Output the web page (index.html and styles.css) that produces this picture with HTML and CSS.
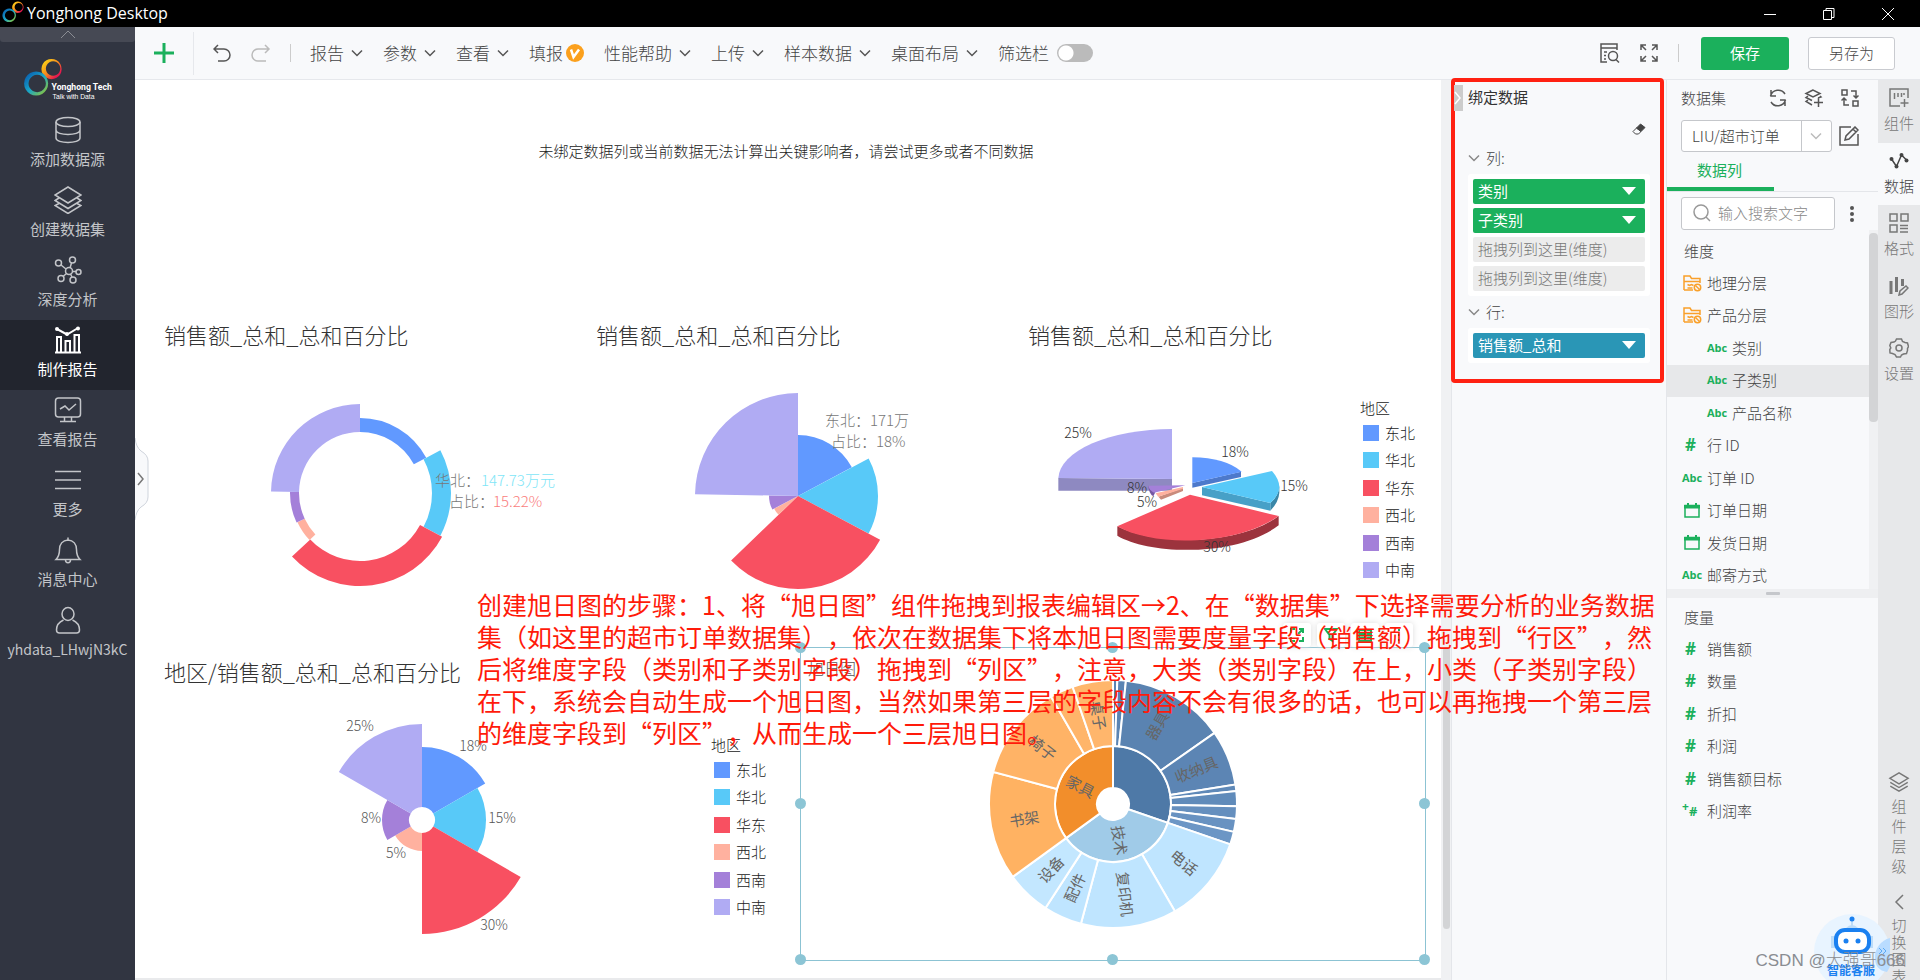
FILE: index.html
```html
<!DOCTYPE html>
<html lang="zh-CN">
<head>
<meta charset="utf-8">
<title>Yonghong Desktop</title>
<link rel="stylesheet" href="styles.css">
</head>
<body>
<svg class="defs" width="0" height="0" aria-hidden="true">
  <defs>
    <linearGradient id="warm" x1="0" y1="0" x2="1" y2="1"><stop offset="0.1" stop-color="#fbd616"/><stop offset="0.5" stop-color="#f5851f"/><stop offset="0.8" stop-color="#e5174f"/></linearGradient>
    <linearGradient id="cool" x1="0" y1="0" x2="1" y2="1"><stop offset="0.1" stop-color="#0a5fb0"/><stop offset="0.5" stop-color="#18a5c8"/><stop offset="0.9" stop-color="#8bc53f"/></linearGradient>
    <symbol id="rings" viewBox="0 0 40 48"><path fill="url(#warm)" fill-rule="evenodd" d="M29 1a10.500 10.500 0 1 1-.1 0zM30.500 3.500a7.500 7.500 0 1 0 .1 0z"/><path fill="url(#cool)" fill-rule="evenodd" d="M13 14a12.500 12.500 0 1 1-.1 0zM14 17.500a9 9 0 1 0 .1 0z"/></symbol>
    <symbol id="chev" viewBox="0 0 12 8"><path d="M1 1.500l5 5 5-5"/></symbol>
    <symbol id="folder" viewBox="0 0 20 18"><path d="M2 16V2h6l1.500 2.500H18V9M2 7.500h16M2 16h9M5.500 10.500l2 1 2-1 2 1M5.500 14h5"/><circle cx="15.500" cy="13.500" r="3.200"/><path d="M13.500 11.500l4 4"/></symbol>
    <symbol id="cal" viewBox="0 0 16 15"><path d="M1 2.500h14v11.500H1z" fill="none" stroke="#1bb05c" stroke-width="1.500"/><path d="M0 2h3V0h2v2h6V0h2v2h3v3.500H0z" fill="#1bb05c"/></symbol>
    <symbol id="stack" viewBox="0 0 24 24"><path d="M12 2L2 8l10 6 10-6zM2.500 12.500L12 18l9.500-5.500M2.500 16.500L12 22l9.500-5.500"/></symbol>
  </defs>
</svg>

<header class="titlebar">
  <svg class="app-logo" width="22" height="26"><use href="#rings"/></svg>
  <span class="app-name">Yonghong Desktop</span>
  <div class="win">
    <button aria-label="最小化"><svg width="14" height="14"><path d="M1 7.500h12"/></svg></button>
    <button aria-label="还原"><svg width="14" height="14"><path d="M1.500 3.500h8v9h-8zM4 3.500v-2h8v9H9.500"/></svg></button>
    <button aria-label="关闭"><svg width="14" height="14"><path d="M1 1l12 12M13 1L1 13"/></svg></button>
  </div>
</header>

<div class="app">
  <nav class="side">
    <button class="fold" aria-label="收起"><svg width="16" height="9"><path d="M1 8l7-7 7 7"/></svg></button>
    <svg class="brand" width="92" height="54" viewBox="0 0 92 54">
      <use href="#rings" width="40" height="48" x="1" y="0"/>
      <text x="30" y="33" class="brand-a">Yonghong Tech</text>
      <text x="31" y="43" class="brand-b">Talk with Data</text>
    </svg>
    <a class="nav" href="#"><svg width="28" height="28"><ellipse cx="14" cy="6" rx="12" ry="4.500"/><path d="M2 6v16c0 6 24 6 24 0V6M2 14c0 6 24 6 24 0"/></svg><span>添加数据源</span></a>
    <a class="nav" href="#"><svg width="28" height="28"><path d="M14 1L1 9l13 8 13-8zM5 12l-4 2.500 13 8 13-8-4-2.500M5 17.500L1 19.500l13 8 13-8-4-2"/></svg><span>创建数据集</span></a>
    <a class="nav" href="#"><svg width="28" height="28"><circle cx="15" cy="15" r="3.500"/><circle cx="4.500" cy="7" r="3"/><circle cx="18.500" cy="4" r="3"/><circle cx="24.500" cy="16" r="2.500"/><circle cx="7" cy="22.500" r="3"/><circle cx="19" cy="24" r="3"/><path d="M7 9l5 4M17.500 7l-1.500 5M18.500 15.500H22M12.500 17.500L9 20.500M16.500 18l1.500 3"/></svg><span>深度分析</span></a>
    <a class="nav on" href="#"><svg width="28" height="28"><path d="M1 26.500h26M3 26V11h4v15M11.500 26V15h4.500v11M20.500 26V9h4.500v17M3 3l10 5.500L24 2"/><circle cx="3" cy="3" r="1"/><circle cx="13" cy="8" r="1"/><circle cx="24" cy="2.500" r="1"/></svg><span>制作报告</span></a>
    <a class="nav" href="#"><svg width="28" height="28"><rect x="1.500" y="2" width="25" height="19" rx="3"/><path d="M6 13l5-3 4 4 7-6M10.500 21v4M17.500 21v4M6 25.500h16"/></svg><span>查看报告</span></a>
    <a class="nav" href="#"><svg width="28" height="28"><path d="M1 5.500h26M1 14h26M1 22.500h26"/></svg><span>更多</span></a>
    <a class="nav" href="#"><svg width="28" height="28"><path d="M2 23.500h24c-3-3-3.500-5-3.500-10 0-5-3-9-8.500-9.500-5.500.5-8.500 4.500-8.500 9.500 0 5-.5 7-3.500 10zM14 4V1.500M11.500 24c0 3.500 5 3.500 5 0"/></svg><span>消息中心</span></a>
    <a class="nav user" href="#"><svg width="28" height="28"><ellipse cx="14" cy="8" rx="6" ry="6.500"/><path d="M9.500 14C5 16 2.500 19.500 2.500 24q0 3 3 3h17q3 0 3-3c0-4.500-2.500-8-7-10"/></svg><span>yhdata_LHwjN3kC</span></a>
  </nav>

  <div class="main">
    <div class="toolbar">
      <button class="plus" aria-label="新建"><svg width="20" height="20"><path d="M10 0v20M0 10h20"/></svg></button>
      <div class="history">
        <button aria-label="撤销"><svg width="18" height="18"><path d="M5 1L1 5l4 4M1 5h10a6 6 0 0 1 0 12H5"/></svg></button>
        <button aria-label="重做" class="dim"><svg width="20" height="18"><path d="M14 1l4 4-4 4M18 5H7a6 6 0 0 0 0 12h8"/></svg></button>
      </div>
      <div class="menus">
        <button>报告<svg width="12" height="8"><use href="#chev"/></svg></button>
        <button>参数<svg width="12" height="8"><use href="#chev"/></svg></button>
        <button>查看<svg width="12" height="8"><use href="#chev"/></svg></button>
        <button class="vip">填报<svg width="18" height="18"><circle cx="9" cy="9" r="9"/><path d="M5 5.500l2.500 7.500L13 5.500"/></svg></button>
        <button>性能帮助<svg width="12" height="8"><use href="#chev"/></svg></button>
        <button>上传<svg width="12" height="8"><use href="#chev"/></svg></button>
        <button>样本数据<svg width="12" height="8"><use href="#chev"/></svg></button>
        <button>桌面布局<svg width="12" height="8"><use href="#chev"/></svg></button>
        <label>筛选栏<input type="checkbox" class="switch"></label>
      </div>
      <div class="actions">
        <button class="ib" aria-label="预览"><svg width="20" height="20"><path d="M7 19H1V1h16v6M1 5h16M4 9h3M4 12.500h2M4 16h2"/><circle cx="13" cy="13" r="4.500"/><path d="M16 16.500l3 3"/></svg></button>
        <button class="ib" aria-label="全屏"><svg width="18" height="18"><path d="M1 6V1h5M1 1l5 5M12 1h5v5M17 1l-5 5M1 12v5h5M1 17l5-5M17 12v5h-5M17 17l-5-5"/></svg></button>
        <button class="save">保存</button>
        <button class="saveas">另存为</button>
      </div>
    </div>

    <div class="work">
      <main class="canvas">
        <p class="notice">未绑定数据列或当前数据无法计算出关键影响者，请尝试更多或者不同数据</p>
        <div class="row3">
          <section class="widget">
            <h2>销售额_总和_总和百分比</h2>
            <svg id="ring" width="432" height="301" viewBox="145 354 432 301">
              <g class="slices"></g>
              <g class="tip"><text x="435" y="486">华北：</text><text x="481" y="486" class="t-cyan">147.73万元</text><text x="449" y="507">占比：</text><text x="493" y="507" class="t-red">15.22%</text></g>
            </svg>
          </section>
          <section class="widget">
            <h2>销售额_总和_总和百分比</h2>
            <svg id="rose" width="432" height="301" viewBox="577 354 432 301">
              <g class="slices"></g>
              <g class="tip"><text x="825" y="426">东北：171万</text><text x="831" y="447">占比：18%</text></g>
            </svg>
          </section>
          <section class="widget">
            <h2>销售额_总和_总和百分比</h2>
            <div class="body">
              <svg width="346" height="301" viewBox="1009 354 346 301">
                <g transform="translate(1000 300) scale(.33333)">
                  <path fill="#8e89c1" d="M175 534L516 537V572L175 572z"/>
                  <path fill="#b0abf3" d="M516 387V537L175 534A341 150 0 0 1 516 387z"/>
                  <path fill="#4d79cb" d="M577 549L723 515V531L577 563z"/>
                  <path fill="#6199ff" d="M577 472Q675 473 725 515L577 549z"/>
                  <path fill="#3a87a8" d="M811 609Q836 590 838 556V578Q836 606 811 632z"/>
                  <path fill="#47a0c7" d="M606 561L811 609V632L606 586z"/>
                  <path fill="#58c9f8" d="M606 561L816 513Q862 565 811 609z"/>
                  <path fill="#9c333d" d="M352 679C460 735 710 740 836 648V676C710 772 450 765 352 707z"/>
                  <path fill="#f85061" d="M570 584L836 648C710 738 460 742 352 679z"/>
                  <path fill="#7558a2" d="M445 557L466 577L460 589Q446 580 445 557z"/>
                  <path fill="#a480d9" d="M556 556L445 557Q447 570 462 578z"/>
                  <path fill="#c98b7c" d="M467 580L475 590L549 564V573L483 599z"/>
                  <path fill="#ffb19f" d="M467 580L475 590L549 566V561z"/>
                </g>
                <g class="pct dark">
                  <text x="1078" y="438">25%</text><text x="1235" y="457">18%</text><text x="1294" y="491">15%</text>
                  <text x="1137" y="493">8%</text><text x="1147" y="507">5%</text><text x="1217" y="552">30%</text>
                </g>
              </svg>
              <div class="legend">
                <h3>地区</h3>
                <ul><li class="c1">东北</li><li class="c2">华北</li><li class="c3">华东</li><li class="c4">西北</li><li class="c5">西南</li><li class="c6">中南</li></ul>
              </div>
            </div>
          </section>
        </div>
        <div class="row2">
          <section class="widget half">
            <h2>地区/销售额_总和_总和百分比</h2>
            <div class="body">
              <svg id="petal" width="561" height="285" viewBox="145 691 561 285">
                <g class="slices"></g>
                <g class="pct">
                  <text x="360" y="731">25%</text><text x="473" y="751">18%</text><text x="502" y="823">15%</text>
                  <text x="494" y="930">30%</text><text x="396" y="858">5%</text><text x="371" y="823">8%</text>
                </g>
              </svg>
              <div class="legend">
                <h3>地区</h3>
                <ul><li class="c1">东北</li><li class="c2">华北</li><li class="c3">华东</li><li class="c4">西北</li><li class="c5">西南</li><li class="c6">中南</li></ul>
              </div>
            </div>
          </section>
          <section class="widget picked">
            <h2>旭日图</h2>
            <svg id="sun" viewBox="801 648 624 312"><g class="slices"></g><g class="names"></g></svg>
            <i class="h tl"></i><i class="h tc"></i><i class="h tr"></i><i class="h ml"></i><i class="h mr"></i><i class="h bl"></i><i class="h bc"></i><i class="h br"></i>
            <div class="quick">
              <button aria-label="放大"><svg width="16" height="16"><path d="M2 6V2h4M10 2h4v4M14 2l-5 5M2 10v4h4M14 10v4h-4"/></svg></button>
              <button aria-label="筛选"><svg width="16" height="16"><path d="M2 2h12L9.500 8v6l-3-2V8z"/></svg></button>
              <button aria-label="表格"><svg width="16" height="16"><path d="M2 3h12v11H2zM2 7h12M2 10.500h12M8 3v11"/></svg></button>
              <button aria-label="更多"><svg width="16" height="16"><path d="M8 2v2M8 7v2M8 12v2"/></svg></button>
            </div>
          </section>
        </div>
        <button class="drawer" aria-label="展开"><svg width="14" height="84"><path class="edge" d="M0 1Q1 10 6 14Q13 18 13 24V60Q13 66 6 70Q1 74 0 83"/><path class="arr" d="M3 36l5 6-5 6"/></svg></button>
      </main>
      <div class="vbar"><div class="vthumb"></div></div>

      <aside class="bind">
        <div class="frame">
          <button class="grab" aria-label="折叠"><svg width="8" height="14"><path d="M1 1l5 6-5 6"/></svg></button>
          <h2>绑定数据</h2>
          <button class="erase" aria-label="清除"><svg width="14" height="12"><path d="M8.500 1L13 4.500 9 8.500 4.500 5z" fill="#444"/><path d="M4.500 5L9 8.500 6.500 11h-3L1 8.500z"/></svg></button>
          <h3><svg width="12" height="8"><use href="#chev"/></svg>列:</h3>
          <div class="slots">
            <button class="pill">类别</button>
            <button class="pill">子类别</button>
            <div class="pill empty">拖拽列到这里(维度)</div>
            <div class="pill empty">拖拽列到这里(维度)</div>
          </div>
          <h3><svg width="12" height="8"><use href="#chev"/></svg>行:</h3>
          <div class="slots"><button class="pill blue">销售额_总和</button></div>
        </div>
      </aside>

      <aside class="data">
        <div class="dhead">
          <h2>数据集</h2>
          <button aria-label="刷新"><svg width="18" height="18"><path d="M1.500 7A8 8 0 0 1 16 5M2 1v6h5M16.500 11A8 8 0 0 1 2 13M16 17v-6h-5"/></svg></button>
          <button aria-label="添加数据集"><svg width="20" height="18"><path d="M9 1L2 4.500 9 8l7-3.500zM4 7l-2 1.500 6 3M16 7l1 1-3 1M4 11l-2 1.500 6 3.500M10 13.500h9M14.500 9v9"/></svg></button>
          <button aria-label="替换"><svg width="18" height="18"><path d="M1 1h5v5H1zM12 12h5v5h-5zM10 2h5v6M12.500 6.500L15 9l2.500-2.500M8 16H3v-6M.5 11.500L3 9l2.500 2.500"/></svg></button>
        </div>
        <div class="dpick">
          <div class="sel"><select aria-label="数据集"><option>LIU/超市订单</option></select><svg width="12" height="8"><use href="#chev"/></svg></div>
          <button aria-label="编辑"><svg width="20" height="20"><path d="M12 1H1v18h18V8M6 14l1-4 9-9 3 3-9 9zM14 3l3 3"/></svg></button>
        </div>
        <div class="tabs"><a href="#">数据列</a></div>
        <div class="find">
          <label class="box"><svg width="18" height="18"><circle cx="8" cy="8" r="7"/><path d="M13 13l4 4"/></svg><input type="text" placeholder="输入搜索文字" aria-label="搜索"></label>
          <button aria-label="更多"><svg width="4" height="16"><circle cx="2" cy="2" r="2"/><circle cx="2" cy="8" r="2"/><circle cx="2" cy="14" r="2"/></svg></button>
        </div>
        <div class="dims">
          <div class="dlist">
            <h3>维度</h3>
            <ul class="ten">
              <li><svg class="fo" width="20" height="18"><use href="#folder"/></svg>地理分层</li>
              <li><svg class="fo" width="20" height="18"><use href="#folder"/></svg>产品分层</li>
              <li class="sub"><b>Abc</b>类别</li>
              <li class="sub sel-row"><b>Abc</b>子类别</li>
              <li class="sub"><b>Abc</b>产品名称</li>
              <li><b class="num">#</b>行 ID</li>
              <li><b>Abc</b>订单 ID</li>
              <li><svg width="16" height="15"><use href="#cal"/></svg>订单日期</li>
              <li><svg width="16" height="15"><use href="#cal"/></svg>发货日期</li>
              <li><b>Abc</b>邮寄方式</li>
            </ul>
          </div>
          <div class="dbar"><div class="dthumb"></div></div>
        </div>
        <div class="split"></div>
        <div class="meas">
          <h3>度量</h3>
          <ul class="six">
            <li><b class="num">#</b>销售额</li><li><b class="num">#</b>数量</li><li><b class="num">#</b>折扣</li>
            <li><b class="num">#</b>利润</li><li><b class="num">#</b>销售额目标</li><li><b class="num calc"><sup>+</sup>#</b>利润率</li>
          </ul>
        </div>
      </aside>

      <nav class="strip">
        <div class="five">
          <a href="#"><svg width="20" height="20"><path d="M11 18H1V1h18v9M5.500 5v6M9 5v4M12.500 5v4M15 5v2M15.500 11v8M11.500 15h8"/></svg>组件</a>
          <a href="#" class="on"><svg width="20" height="20"><path d="M2.500 8L7.500 15.500 12.500 4 17.500 9"/><g class="dot"><circle cx="2.500" cy="8" r="2"/><circle cx="7.500" cy="15.500" r="2"/><circle cx="12.500" cy="4" r="2"/><circle cx="17.500" cy="9.500" r="2"/></g></svg>数据</a>
          <a href="#"><svg width="20" height="20"><path d="M1 1h7v7H1zM12 1h7v7h-7zM1 12h7v7H1zM11 12.500h8M11 15.500h8M11 19h8"/></svg>格式</a>
          <a href="#" class="bold"><svg width="20" height="20"><path d="M2 5v13M7.500 1v15M13.500 3v7"/><path class="thin" d="M10 19l1-4 6-5 2 2-6 6z"/></svg>图形</a>
          <a href="#"><svg width="20" height="20"><path d="M7.500 1h5l1 2.500 2.500 1 2.500.5 1 3.500-1 2v2l-1 3-3 .5-2 1-1 2h-4l-1.500-2.500-2.500-1-2.500-.5L.8 11.500l1-1.500-1-2.500L2 4.500l3-.5 1.500-1z"/><circle cx="10" cy="10" r="3"/></svg>设置</a>
        </div>
        <a href="#" class="v"><svg width="22" height="22"><use href="#stack" width="22" height="22"/></svg><span>组件层级</span></a>
        <a href="#" class="v tight"><svg width="10" height="16"><path d="M9 1L2 8l7 7"/></svg><span>切换图表</span></a>
      </nav>
    </div>
  </div>
</div>

<p class="note">创建旭日图的步骤：1、将“旭日图”组件拖拽到报表编辑区→2、在“数据集”下选择需要分析的业务数据<br>集（如这里的超市订单数据集），依次在数据集下将本旭日图需要度量字段（销售额）拖拽到“行区”，然<br>后将维度字段（类别和子类别字段）拖拽到“列区”，注意，大类（类别字段）在上，小类（子类别字段）<br>在下，系统会自动生成一个旭日图，当然如果第三层的字段内容不会有很多的话，也可以再拖拽一个第三层<br>的维度字段到“列区”，从而生成一个三层旭日图。</p>

<button class="bot" aria-label="智能客服">
  <svg width="76" height="68" viewBox="0 0 76 68">
    <circle cx="38" cy="38" r="38" fill="#e8f4ff"/>
    <path d="M76 24a20 20 0 0 0-15 20q0 12 12 14a38 38 0 0 0 3-34z" fill="#b9dcff"/>
    <path d="M65 34l3 3-3 3M69 34l3 3-3 3" fill="none" stroke="#5aa9f5"/>
    <path d="M38 6v8" stroke="#bcdcf8" stroke-width="2"/><circle cx="38" cy="5" r="2.500" fill="#1a80f0"/>
    <path d="M32 14q6-6 12 0z" fill="#bcdcf8"/><path d="M17 22h4v12h-4zM55 22h4v12h-4z" fill="#bcdcf8"/>
    <rect x="22" y="16" width="33" height="22" rx="9" fill="#fff" stroke="#1a80f0" stroke-width="4"/>
    <circle cx="32" cy="27" r="2.500" fill="#1a80f0"/><circle cx="44" cy="27" r="2.500" fill="#1a80f0"/>
  </svg>
  <span>智能客服</span>
</button>
<div class="mark">CSDN @大强哥666</div>
<script src="charts.js"></script>
</body>
</html>
```
FILE: styles.css
```css
* { box-sizing: border-box; }
body {
  margin: 0; height: 100vh; display: flex; flex-direction: column; overflow: hidden; position: relative;
  font-family: "Noto Sans CJK SC", sans-serif; font-size: 15px; font-weight: 300; line-height: 20px; color: #333; background: #f8f9fb;
  text-spacing-trim: space-all;
}
h2, h3, p, ul { margin: 0; padding: 0; font-weight: inherit; font-size: inherit; }
ul { list-style: none; }
a { color: inherit; text-decoration: none; }
button { border: 0; padding: 0; background: none; font: inherit; color: inherit; display: flex; align-items: center; }
svg { display: block; flex: none; fill: none; stroke: none; }
.defs { position: absolute; }

.titlebar { height: 27px; flex: none; background: #000; color: #fff; display: flex; align-items: center; padding-right: 25px; }
.app-logo { margin: 0 3px 0 2px; }
.app-name { font: 16px/20px "Open Sans", sans-serif; padding-bottom: 2px; }
.win { margin-left: auto; display: flex; gap: 45px; }
.win svg { stroke: #fff; }

.app { flex: 1; display: flex; min-height: 0; }
.side { width: 135px; flex: none; background: #313541; color: #c3c5c9; display: flex; flex-direction: column; }
.fold { height: 15px; background: #464954; justify-content: center; border-radius: 0 0 3px 3px; }
.fold svg { stroke: #8b8d94; }
.brand { margin: 16px 0 0 21px; height: 52px; overflow: visible; }
.brand-a { font: bold 9px Roboto, sans-serif; fill: #fff; }
.brand-b { font: 7px "Liberation Sans", sans-serif; fill: #fff; }
.nav { height: 70px; display: flex; flex-direction: column; align-items: center; padding-top: 6px; gap: 5px; font-weight: 400; }
.nav svg { stroke: #c3c5c9; stroke-width: 1.5; }
.nav.on { background: #22252e; color: #fff; }
.nav.on svg { stroke: #fff; stroke-width: 2; }
.nav.user { font-size: 14px; }

.main { flex: 1; min-width: 0; display: flex; flex-direction: column; }
.toolbar { height: 53px; flex: none; border-bottom: 1px solid #e6e8ec; display: flex; align-items: center; font-size: 17px; color: #444; padding-right: 25px; }
.plus { width: 59px; height: 43px; justify-content: center; border-right: 1px solid #e6e8ec; }
.plus svg { stroke: #1bb05c; stroke-width: 3; }
.history { display: flex; gap: 20px; padding: 0 19px 0 19px; border-right: 1px solid #ccc; }
.history svg { stroke: #555; stroke-width: 1.5; }
.history .dim svg { stroke: #bbb; }
.menus { display: flex; gap: 20px; padding-left: 19px; }
.menus button { gap: 7px; }
.menus button svg { stroke: #555; stroke-width: 1.5; }
.menus .vip { gap: 3px; }
.menus .vip circle { fill: #fba01d; stroke: none; }
.menus .vip path { stroke: #fff; stroke-width: 2.5; }
.menus label { display: flex; align-items: center; gap: 8px; }
.switch { appearance: none; margin: 0; width: 36px; height: 18px; border-radius: 9px; background: radial-gradient(circle at 9px 9px, #fff 7px, #bbb 8px); }
.actions { margin-left: auto; display: flex; align-items: center; font-size: 15px; }
.ib svg { stroke: #555; stroke-width: 1.5; }
.ib + .ib { margin-left: 20px; padding-right: 20px; border-right: 1px solid #ccc; }
.save { width: 88px; height: 33px; justify-content: center; margin-left: 22px; background: #1bb05c; color: #fff; border-radius: 3px; font-weight: 400; }
.saveas { width: 87px; height: 33px; justify-content: center; margin-left: 19px; background: #fff; border: 1px solid #c9cbd0; border-radius: 3px; }

.work { flex: 1; display: flex; min-height: 0; }
.canvas { flex: 1; min-width: 0; background: #fff; position: relative; padding-left: 10px; border-bottom: 2px solid #e9eaec; overflow: hidden; }
.notice { height: 238px; padding-top: 61px; text-align: center; padding-right: 14px; color: #222; }
.row3 { display: grid; grid-template-columns: repeat(3, 1fr); height: 337px; }
.row2 { display: flex; }
.widget h2 { font-size: 22px; line-height: 32px; padding: 0 0 4px 19px; color: #333; }
.body { display: flex; }
.half { width: 655px; flex: none; }
.tip text { font-size: 15px; fill: #777; }
.tip .t-cyan { fill: #7fe6f7; }
.tip .t-red { fill: #fa7d7d; }
.pct text { font-size: 14px; fill: #555; text-anchor: middle; }
.pct.dark text { fill: #333; }
.legend { padding: 43px 0 0 5px; color: #222; }
.legend h3 { line-height: 22px; }
.legend ul { height: 165px; display: grid; grid-auto-rows: 1fr; padding-left: 3px; }
.legend li { display: flex; align-items: center; gap: 6px; }
.legend li::before { content: ""; width: 16px; height: 16px; background: currentColor; }
.c1::before { color: #6199ff; } .c2::before { color: #58c9f8; } .c3::before { color: #f85061; }
.c4::before { color: #ffb19f; } .c5::before { color: #a480d9; } .c6::before { color: #b0abf3; }
.picked { flex: 1; height: 314px; margin: -8px 15px 0 0; border: 1px solid #8cc3d3; position: relative; }
.picked h2 { position: absolute; left: 7px; top: 10px; padding: 0; font-size: 16px; line-height: 20px; color: #555; }
.picked > svg { width: 100%; height: 100%; }
.names text { font-size: 15px; fill: #666; text-anchor: middle; font-weight: 400; }
.h { position: absolute; width: 11px; height: 11px; margin: -6px; border-radius: 50%; background: #8cc5d5; }
.tl, .tc, .tr { top: 0; } .ml, .mr { top: 50%; } .bl, .bc, .br { top: 100%; }
.tl, .ml, .bl { left: 0; } .tc, .bc { left: 50%; } .tr, .mr, .br { left: 100%; }
.quick { position: absolute; right: 12px; top: -25px; display: flex; gap: 6px; }
.quick button { width: 28px; height: 24px; justify-content: center; background: #fff; border-radius: 3px; box-shadow: 0 0 6px #ddd; }
.quick svg { stroke: #1bb05c; stroke-width: 2; }
.drawer { position: absolute; left: 0; top: 357px; }
.edge { fill: #f8f9fb; stroke: #cfd4dc; }
.arr { stroke: #777; stroke-width: 1.5; }
.vbar { width: 10px; background: #f0f1f3; padding: 567px 1px 0 2px; }
.vthumb { height: 282px; border-radius: 4px; background: #d3d4d6; }

.bind { width: 215px; flex: none; border-left: 1px solid #e4e6ea; position: relative; }
.frame { position: absolute; left: -1px; top: -2px; width: 213px; height: 305px; border: 4px solid #ff2112; border-radius: 4px; padding: 5px 10px 0 13px; }
.grab { position: absolute; left: -1px; top: 3px; width: 9px; height: 26px; background: #ccc; }
.grab svg { stroke: #fff; stroke-width: 1.5; }
.frame h2 { font-weight: 400; }
.erase { margin: 16px 4px 0 auto; }
.erase svg { stroke: #444; }
.frame h3 { display: flex; align-items: center; gap: 6px; margin: 13px 0 6px; color: #444; }
.frame h3 svg { stroke: #888; stroke-width: 1.5; }
.slots { background: #fff; border-radius: 3px; padding: 5px; display: flex; flex-direction: column; gap: 4px; }
.slots + h3 { margin-top: 6px; margin-bottom: 6px; }
.pill { height: 25px; padding: 0 9px 1px 5px; border-radius: 2px; background: #1bb05c; color: #fff; font-weight: 400; display: flex; align-items: center; justify-content: space-between; }
.pill:not(.empty)::after { content: ""; border: 7px solid transparent; border-top: 8px solid #fff; border-bottom: 0; }
.pill.blue { background: #2a96b6; }
.pill.empty { background: #ececec; color: #777; font-weight: 300; }

.data { width: 212px; flex: none; border-left: 1px solid #e4e6ea; color: #444; }
.dhead { display: flex; align-items: center; height: 37px; padding: 0 19px 2px 14px; gap: 17px; }
.dhead h2 { margin-right: auto; }
.data button svg { stroke: #555; stroke-width: 1.5; }
.dpick { display: flex; align-items: center; gap: 7px; padding: 3px 0 0 14px; }
.sel { width: 151px; height: 32px; border: 1px solid #c5c7cb; border-radius: 3px; background: #fff; display: flex; align-items: center; }
.sel select { width: 120px; height: 30px; appearance: none; border: 0; border-right: 1px solid #c5c7cb; background: none; font: inherit; color: inherit; padding: 0 10px; }
.sel svg { margin-left: 8px; stroke: #bbb; stroke-width: 1.5; }
.tabs { border-bottom: 1px solid #e4e6ea; height: 40px; }
.tabs a { display: block; width: 107px; height: 39px; padding: 8px 0 0 30px; color: #1bb05c; font-weight: 400; border-bottom: 4px solid #1bb05c; }
.find { display: flex; align-items: center; gap: 15px; padding: 5px 0 0 14px; }
.box { width: 154px; height: 33px; border: 1px solid #c5c7cb; border-radius: 3px; background: #fff; display: flex; align-items: center; gap: 7px; padding: 0 0 2px 11px; }
.box svg { stroke: #999; stroke-width: 1.5; }
.box input { width: 110px; border: 0; padding: 0; background: none; font: inherit; outline: 0; }
.box input::placeholder { color: #888; opacity: 1; }
.find button circle { fill: #555; stroke: none; }
.dims { display: flex; height: 359px; overflow: hidden; }
.dlist { flex: 1; overflow: hidden; }
.dlist h3 { padding: 11px 0 0 17px; height: 37px; }
.ten { height: 325px; display: grid; grid-auto-rows: 1fr; }
.six { height: 195px; display: grid; grid-auto-rows: 1fr; }
.data li { display: flex; align-items: center; padding: 0 0 1px 15px; }
.data li.sub { padding-left: 40px; }
.data li svg { width: 20px; margin-right: 5px; }
.data li b { width: 25px; font: bold 11px/20px "Open Sans", sans-serif; color: #1bb05c; }
.data li b.num { padding-left: 3px; font-size: 17px; }
.data li b.calc { font-size: 13px; padding-left: 0; }
.calc sup { font-size: 12px; line-height: 0; }
.fo { stroke: #f9a02a; stroke-width: 1.5; }
.sel-row { background: #e7e8ea; }
.dbar { width: 9px; background: #f0f1f3; padding-top: 3px; }
.dthumb { height: 189px; border-radius: 4px; background: #d3d4d6; }
.split { height: 9px; background: #eeeff1; display: flex; align-items: center; justify-content: center; }
.split::before { content: ""; width: 14px; height: 3px; background: #c5c7cb; border-radius: 1px; }
.meas h3 { padding: 9px 0 0 17px; height: 35px; }

.strip { width: 42px; flex: none; background: #e7e8ea; color: #777; overflow: hidden; }
.strip svg { stroke: #777; stroke-width: 1.5; }
.five { height: 313px; display: grid; grid-auto-rows: 1fr; }
.five a { display: flex; flex-direction: column; align-items: center; gap: 5px; padding-top: 8px; }
.five .on { background: #f8f9fb; color: #444; }
.five .on svg { stroke: #444; }
.five .bold svg { stroke-width: 3; }
.five .thin { stroke-width: 1.5; }
.dot { fill: #444; stroke: none; }
.v { display: flex; flex-direction: column; align-items: center; margin-top: 378px; }
.v span { width: 15px; margin-top: 3px; }
.v.tight { margin-top: 18px; }
.v.tight span { line-height: 17px; margin-top: 6px; }

.note { position: absolute; left: 477px; top: 588px; font-size: 25px; line-height: 32px; color: #ff1a0a; white-space: nowrap; font-weight: 400; }
.bot { position: absolute; right: 30px; bottom: -2px; display: block; }
.bot span { position: absolute; left: 13px; bottom: 2px; font-size: 12px; font-weight: 700; color: #1a80f0; line-height: 20px; white-space: nowrap; }
.mark { position: absolute; right: 15px; bottom: 7px; font-size: 17px; line-height: 24px; font-family: "Liberation Sans", "Noto Sans CJK SC", sans-serif; color: #8a8d92; }
```
FILE: charts.js
```js
const NS = 'http://www.w3.org/2000/svg';
const C = ['#6199ff', '#58c9f8', '#f85061', '#ffb19f', '#a480d9', '#b0abf3'];

function pt(cx, cy, r, deg) {
  const a = deg * Math.PI / 180;
  return (cx + r * Math.sin(a)).toFixed(2) + ' ' + (cy - r * Math.cos(a)).toFixed(2);
}

function sector(host, cx, cy, from, to, inner, outer, fill, stroke) {
  const big = to - from > 180 ? 1 : 0;
  const p = document.createElementNS(NS, 'path');
  p.setAttribute('d', `M${pt(cx, cy, inner, from)}L${pt(cx, cy, outer, from)}A${outer} ${outer} 0 ${big} 1 ${pt(cx, cy, outer, to)}` +
    `L${pt(cx, cy, inner, to)}A${inner} ${inner} 0 ${big} 0 ${pt(cx, cy, inner, from)}z`);
  p.setAttribute('fill', fill);
  if (stroke) { p.setAttribute('stroke', '#fff'); p.setAttribute('stroke-width', stroke); }
  host.appendChild(p);
}

const slices = id => document.querySelector(`#${id} .slices`);

[[0, 62, 61, 75], [62, 118, 72, 91], [118, 227, 68, 93], [227, 245, 61, 69], [245, 271, 61, 70], [271, 360, 61, 89]]
  .forEach((s, i) => sector(slices('ring'), 360, 493, ...s, C[i]));
[[0, 62, 0.1, 61], [62, 118, 0.1, 80], [118, 226, 0.1, 93], [226, 242, 0.1, 27], [242, 271, 0.1, 29], [271, 360, 0.1, 103]]
  .forEach((s, i) => sector(slices('rose'), 798, 496, ...s, C[i]));
[73, 64, 114, 31, 40, 96]
  .forEach((r, i) => sector(slices('petal'), 422, 820, i * 60, i * 60 + 60, 13, r, C[i]));

const SX = 1113, SY = 804;
[[0, 109, '#4e79a7'], [109, 234, '#a0cbe8'], [234, 360, '#f28e2b']]
  .forEach(([a, b, c]) => sector(slices('sun'), SX, SY, a, b, 16, 58, c, 2));
[[0, 2, '#5b84b3'], [2, 6, '#5b84b3'], [6, 55, '#5a83b1'], [55, 81, '#5c85b4'], [81, 84, '#5f89b8'], [84, 91, '#608bba'],
 [91, 97, '#658fbe'], [97, 103, '#6892c1'], [103, 109, '#6c96c5'],
 [109, 150, '#bfe5ff'], [150, 195, '#bfe5ff'], [195, 213, '#bfe5ff'], [213, 234, '#c3e7ff'],
 [234, 285, '#ffb262'], [285, 330, '#ffb366'], [330, 341, '#ffb56a'], [341, 360, '#ffb66c']]
  .forEach(([a, b, c]) => sector(slices('sun'), SX, SY, a, b, 58, 124, c, 2));

const names = document.querySelector('#sun .names');
[['器具', 30, 90], ['收纳具', 68, 90], ['电话', 130, 92], ['复印机', 173, 91], ['配件', 204, 92], ['设备', 223, 90],
 ['书架', 260, 90], ['椅子', 308, 90], ['桌子', 350, 90], ['家具', 297, 37], ['技术', 171, 37]]
  .forEach(([word, deg, r]) => {
    const t = document.createElementNS(NS, 'text');
    t.textContent = word;
    t.setAttribute('transform', `translate(${pt(SX, SY, r, deg)}) rotate(${deg < 180 ? deg - 90 : deg + 90})`);
    t.setAttribute('y', 5);
    names.appendChild(t);
  });
```
